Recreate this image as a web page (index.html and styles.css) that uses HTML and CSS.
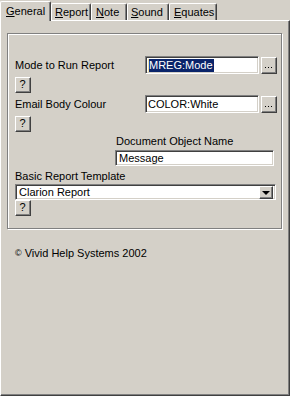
FILE: index.html
```html
<!DOCTYPE html>
<html>
<head>
<meta charset="utf-8">
<link rel="stylesheet" href="styles.css">
</head>
<body>
<div class="tabs">
  <div class="tab sel t-general"><u>G</u>eneral</div>
  <div class="tab t-report"><u>R</u>eport</div>
  <div class="tab t-note"><u>N</u>ote</div>
  <div class="tab t-sound"><u>S</u>ound</div>
  <div class="tab t-equates"><u>E</u>quates</div>
</div>
<div class="panel">
  <div class="group">
    <div class="row">
      <span class="label">Mode to Run Report</span>
      <div class="input short"><span class="caret"></span><span class="hl">MREG:Mode</span></div>
      <div class="btn dots"><i></i><i></i><i></i></div>
    </div>
    <div class="btn help">?</div>
    <div class="row row2">
      <span class="label">Email Body Colour</span>
      <div class="input short">COLOR:White</div>
      <div class="btn dots"><i></i><i></i><i></i></div>
    </div>
    <div class="btn help">?</div>
    <div class="doc">
      <div class="doc-label">Document Object Name</div>
      <div class="input msg">Message</div>
    </div>
    <div class="basic-label">Basic Report Template</div>
    <div class="input combo">
      <span class="combo-text">Clarion Report</span>
      <div class="btn arrow"><span class="tri"></span></div>
    </div>
    <div class="btn help help3">?</div>
  </div>
  <div class="copy"><span class="c">©</span> Vivid Help Systems 2002</div>
</div>
</body>
</html>
```
FILE: styles.css
```css
html, body {
  margin: 0;
  padding: 0;
  background: #d4d0c8;
}
body {
  width: 290px;
  height: 396px;
  overflow: hidden;
  font-family: "Liberation Sans", Arial, sans-serif;
  font-size: 11px;
  line-height: 13px;
  color: #000;
}
.tabs {
  display: flex;
  align-items: flex-end;
  height: 20px;
}
.tab {
  box-sizing: border-box;
  height: 17px;
  border-left: 1px solid #fff;
  border-top: 1px solid #fff;
  border-right: 1px solid #404040;
  box-shadow: inset -1px 0 0 #808080;
  border-radius: 2px 2px 0 0;
  padding: 2px 0 0 3px;
  white-space: nowrap;
}
.tab.sel {
  height: 20px;
  margin-bottom: -1px;
  position: relative;
  z-index: 1;
  background: #d4d0c8;
  padding: 3px 0 0 5px;
}
.t-general { width: 51px; }
.t-report { width: 40px; }
.t-note { width: 36px; padding-left: 4px; }
.t-sound { width: 42px; }
.t-equates { width: 48px; padding-left: 4px; }
.panel {
  box-sizing: border-box;
  width: 290px;
  height: 376px;
  border-top: 1px solid #fff;
  border-left: 1px solid #fff;
  border-right: 1px solid #404040;
  border-bottom: 1px solid #404040;
  box-shadow: inset -1px -1px 0 #808080;
  padding: 12px 0 0 6px;
}
.group {
  box-sizing: border-box;
  width: 275px;
  border: 1px solid #808080;
  box-shadow: inset 1px 1px 0 #fff, 1px 1px 0 #fff;
  padding: 22px 4px 12px 7px;
  display: flex;
  flex-direction: column;
  align-items: flex-start;
}
.row {
  display: flex;
  align-items: center;
  width: 100%;
  height: 18px;
}
.row2 { margin-top: 2px; }
.label {
  flex: 1;
  padding-top: 1px;
}
.input {
  box-sizing: border-box;
  background: #fff;
  border-top: 1px solid #808080;
  border-left: 1px solid #808080;
  border-right: 1px solid #fff;
  border-bottom: 1px solid #fff;
  box-shadow: inset 1px 1px 0 #404040, inset -1px -1px 0 #d4d0c8;
  padding: 2px 0 0 3px;
  white-space: nowrap;
  overflow: hidden;
}
.short {
  width: 114px;
  height: 18px;
  display: flex;
  align-items: center;
  padding: 0 0 0 2px;
}
.caret {
  width: 1px;
  height: 13px;
  background: #f0e0a0;
}
.hl {
  background: #0a246a;
  color: #fff;
  padding: 0 1px 0 0;
}
.btn {
  box-sizing: border-box;
  background: #d4d0c8;
  border-top: 1px solid #fff;
  border-left: 1px solid #fff;
  border-right: 1px solid #404040;
  border-bottom: 1px solid #404040;
  box-shadow: inset -1px -1px 0 #808080;
  text-align: center;
}
.dots {
  width: 16px;
  height: 17px;
  margin-left: 2px;
  display: flex;
  justify-content: center;
  align-items: flex-end;
  gap: 2px;
  padding: 0 1px 5px 0;
}
.dots i {
  display: block;
  width: 1px;
  height: 1px;
  background: #000;
}
.help {
  width: 16px;
  height: 16px;
  margin-top: 3px;
  line-height: 13px;
  padding-right: 1px;
}
.help3 { margin-top: 0; }
.doc {
  margin-top: 3px;
  margin-left: 100px;
}
.doc-label {
  padding-left: 1px;
  height: 13px;
}
.msg {
  margin-top: 2px;
  width: 159px;
  height: 16px;
  padding: 1px 0 0 3px;
  line-height: 12px;
}
.basic-label {
  margin-top: 4px;
  height: 13px;
}
.combo {
  margin-top: 1px;
  width: 261px;
  height: 16px;
  display: flex;
  align-items: center;
  padding: 0 2px 0 3px;
}
.combo-text { flex: 1; }
.arrow {
  width: 14px;
  height: 13px;
  display: flex;
  align-items: center;
  justify-content: center;
}
.tri {
  width: 0;
  height: 0;
  border-left: 4px solid transparent;
  border-right: 4px solid transparent;
  border-top: 4px solid #000;
  margin-top: 1px;
}
.copy {
  margin-top: 18px;
  padding-left: 8px;
}
.c {
  font-size: 9px;
  vertical-align: 1px;
}
```
